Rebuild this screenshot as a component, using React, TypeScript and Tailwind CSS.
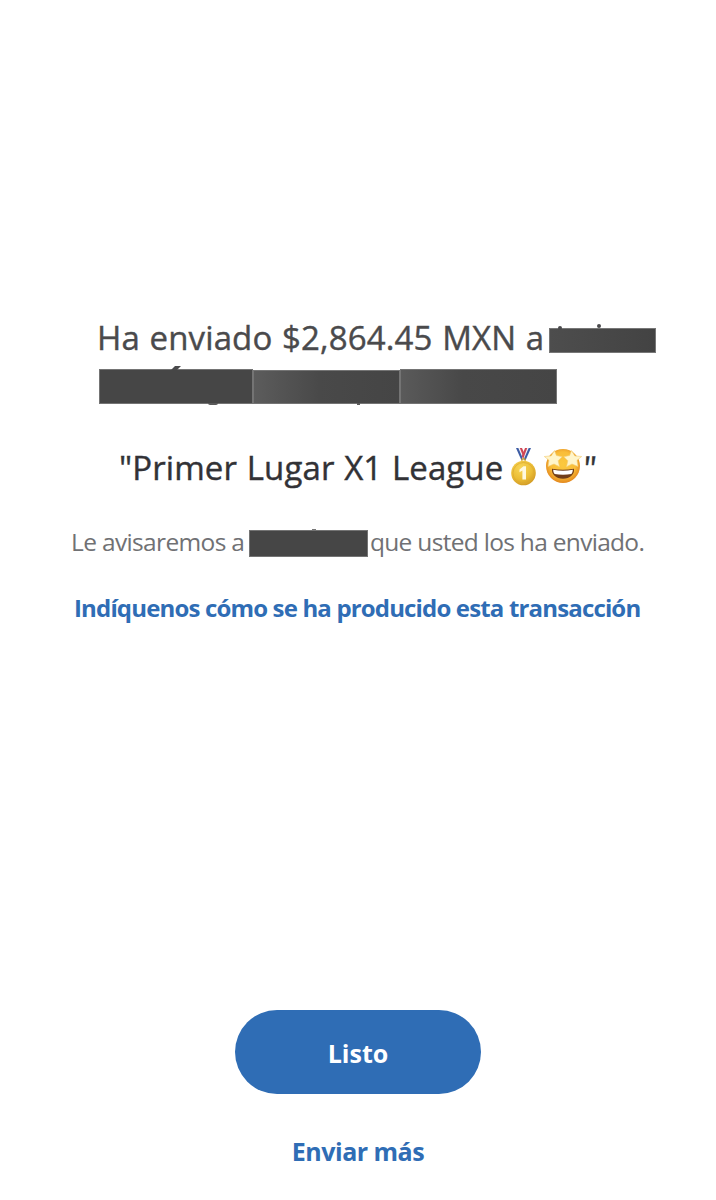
interface Bar {
  id: string;
  className: string;
}

const nameBars: Bar[] = [
  { id: 'first', className: 'w-[154px] h-[35px] bg-[#464646]' },
  { id: 'second', className: 'w-[147px] h-[34px] bg-gradient-to-r from-[#5c5c5c] via-[#494949] via-45% to-[#454545]' },
  { id: 'third', className: 'w-[157px] h-[35px] bg-gradient-to-r from-[#5a5a5a] via-[#484848] via-40% to-[#454545]' },
];

function MedalIcon() {
  return (
    <svg viewBox="0 0 27 38" className="w-[27px] h-[38px] shrink-0">
      <defs>
        <radialGradient id="gold" cx="40%" cy="30%" r="75%">
          <stop offset="0" stopColor="#f8d658" />
          <stop offset="0.6" stopColor="#ebbd35" />
          <stop offset="1" stopColor="#cf9722" />
        </radialGradient>
      </defs>
      <path d="M6 0h3l5.500 12h-3.200z" fill="#3d5da5" />
      <path d="M8.300 0h2l4.700 10.500-1.200 2z" fill="#f4f2f4" />
      <path d="M9.800 0h2.200l3 7-1.200 3z" fill="#cf4655" />
      <path d="M21 0h-3l-5.500 12h3.200z" fill="#3d5da5" />
      <path d="M18.700 0h-2l-4.700 10.500 1.200 2z" fill="#f4f2f4" />
      <path d="M17.200 0H15l-3.200 8 1.400 3z" fill="#cf4655" />
      <circle cx="13.500" cy="12.300" r="1.700" fill="none" stroke="#d5a52c" strokeWidth="1.200" />
      <circle cx="13.500" cy="25" r="12.300" fill="url(#gold)" />
      <circle cx="13.500" cy="25" r="10.500" fill="none" stroke="#dcab30" strokeWidth="0.700" />
      <path d="M9.500 21.500l4-3.300h2.500v13.300h-3.600v-9l-2.900 1.700z" fill="#fff9df" />
    </svg>
  );
}

function StarStruckIcon() {
  return (
    <svg viewBox="0 0 38 36" className="w-[38px] h-[36px] shrink-0">
      <defs>
        <radialGradient id="face" cx="50%" cy="45%" r="56%">
          <stop offset="0" stopColor="#fbc93f" />
          <stop offset="0.650" stopColor="#f9bd39" />
          <stop offset="1" stopColor="#e2851c" />
        </radialGradient>
      </defs>
      <circle cx="19" cy="18" r="17" fill="url(#face)" />
      <path d="M8 20.800q11 2 22 0c.8 5.500-4 10-11 10s-11.800-4.500-11-10z" fill="#713d18" />
      <path d="M9.200 21.800q9.800 1.800 19.600 0c0 1.900-.6 3.400-1.500 4.200-5.300.9-11.300.9-16.600 0-.9-.8-1.500-2.300-1.500-4.200z" fill="#fff" />
      <path
        d="M10.500 2.500l1.900 5 5.800 1.200-4 4 1.300 6-5.500-2.700-6 2.500 1-6.200L.3 8.500l6.900-.6z"
        fill="#fff5cb"
        stroke="#f3cd74"
        strokeWidth="0.600"
        strokeLinejoin="round"
      />
      <path
        d="M27.500 2.500l-1.900 5-5.800 1.200 4 4-1.300 6 5.500-2.700 6 2.500-1-6.200 4.700-3.800-6.900-.6z"
        fill="#fff5cb"
        stroke="#f3cd74"
        strokeWidth="0.600"
        strokeLinejoin="round"
      />
    </svg>
  );
}

export default function App() {
  return (
    <main className="flex flex-col w-[716px] h-[1200px] overflow-hidden bg-white pt-[315px] font-['Open_Sans','Noto_Sans',sans-serif] whitespace-nowrap">
      {/* Amount and recipient */}
      <div className="flex h-[44px] pl-[97px] text-[33px] leading-[45px] text-[#4a4a4c] [-webkit-text-stroke:0.4px_#4a4a4c]">
        <span className="w-[452px] tracking-[0.12px] [word-spacing:1px]">Ha enviado $2,864.45 MXN a</span>
        <span className="relative mt-[13px] w-[107px] h-[25px] border border-[#777] bg-gradient-to-r from-[#4d4d4d] to-[#434343]">
          <i className="absolute left-[8px] -top-[3px] size-1 rounded-full bg-[#4a4a4c]" />
          <i className="absolute left-[47px] -top-[5px] size-1 rounded-full bg-[#4a4a4c]" />
        </span>
      </div>

      <div className="relative flex items-end mt-[10px] h-[35px] pl-[99px]">
        {nameBars.map((bar) => (
          <span key={bar.id} className={`border border-[#747474] ${bar.className}`} />
        ))}
        <i className="absolute left-[173px] -top-[3px] w-[6px] h-[4px] -skew-x-[45deg] bg-[#4a4a4c]" />
        <i className="absolute left-[208px] -bottom-[1px] w-[10px] h-[2px] rounded-b-full bg-[#5a5a5a]" />
        <i className="absolute left-[357px] -bottom-[1px] w-[3px] h-[2px] bg-[#5a5a5a]" />
      </div>

      {/* Note attached to the payment */}
      <div className="flex mt-[41px] h-[44px] pl-[119px] text-[33px] leading-[45px] text-[#323236] [-webkit-text-stroke:0.4px_#323236]">
        <span className="w-[391px] tracking-[0.1px] [word-spacing:1px]">"Primer Lugar X1 League</span>
        <span className="flex w-[73px] pt-[3px] gap-[7px] [-webkit-text-stroke:0]">
          <MedalIcon />
          <StarStruckIcon />
        </span>
        <span className="-skew-x-6">"</span>
      </div>

      <div className="flex mt-[35px] h-[36px] pl-[71px] text-[24.5px] leading-[36px] text-[#707174]">
        <span className="w-[178px] tracking-[-0.65px]">Le avisaremos a</span>
        <span className="relative mt-[6px] w-[119px] h-[27px] border border-[#747474] bg-[#464646]">
          <i className="absolute left-[62px] -top-[2px] w-[4px] h-[1px] bg-[#777]" />
        </span>
        <span className="pl-[2px] tracking-[-0.7px]">que usted los ha enviado.</span>
      </div>

      <a href="#" className="mt-[30px] h-[36px] pl-[74px] text-[24px] leading-[36px] font-bold tracking-[-0.84px] text-[#2f6db5]">
        Indíquenos cómo se ha producido esta transacción
      </a>

      {/* Actions */}
      <div className="flex flex-col items-center mt-auto">
        <button className="w-[246px] h-[84px] rounded-full bg-[#2f6db5] pt-[4px] text-[25px] font-bold text-white">
          Listo
        </button>
        <button className="mt-[39px] mb-[31px] h-[36px] text-[25px] leading-[35px] font-bold tracking-[-0.5px] text-[#2f6db5]">
          Enviar más
        </button>
      </div>
    </main>
  );
}
